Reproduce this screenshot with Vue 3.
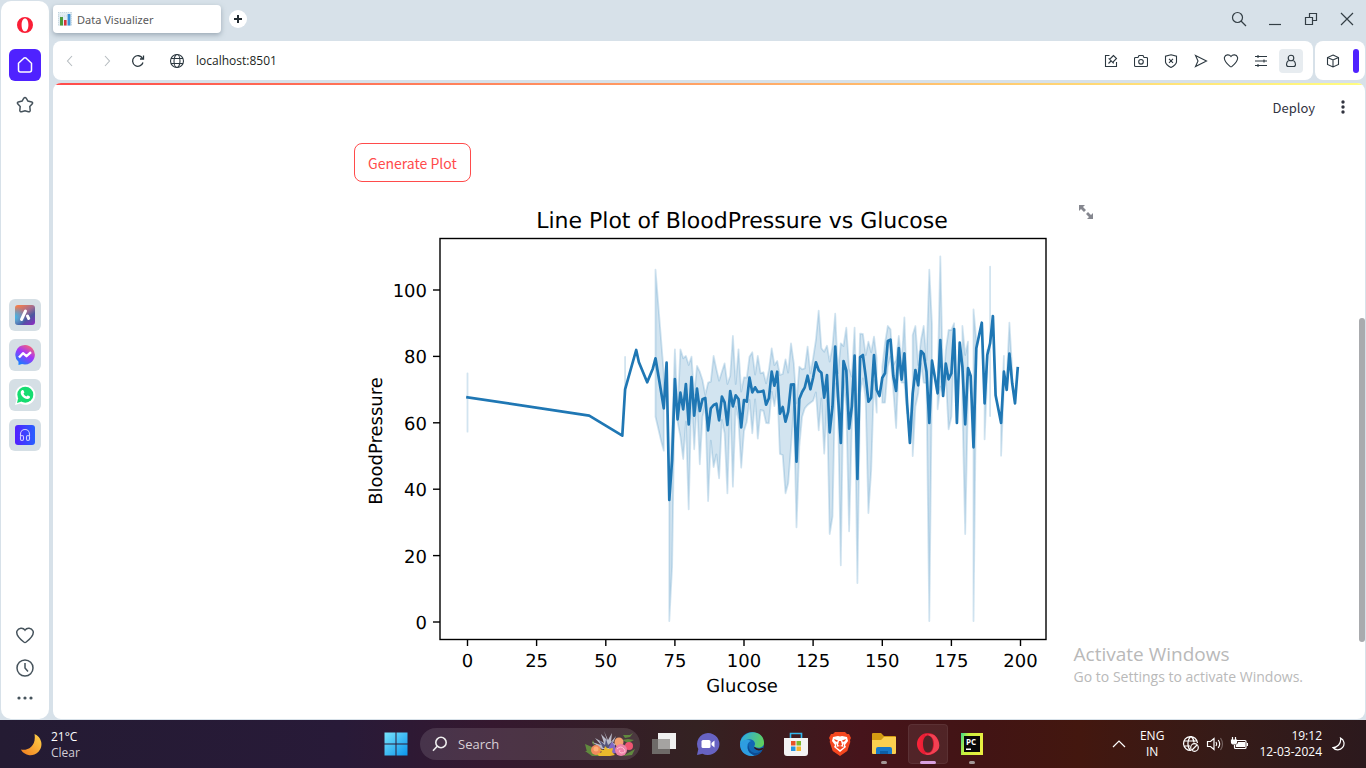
<script setup>
import { ref } from 'vue'

const address = ref('localhost:8501')
const query = ref('')

// Plot geometry: glucose on x, vertical positions in thirds of a pixel below the plot top.
const px = (g) => Math.round((467.5 + g * 2.765) * 10) / 10
const py = (v) => Math.round((240 + v / 3) * 10) / 10

const early = [[0, 472], [44, 527], [56, 587], [57, 448], [61, 330], [62, 367], [65, 427], [67, 386], [68, 355], [70, 455]]
const from71 = [
  505, 368, 780, 660, 417, 538, 458, 508, 432, 553, 411, 527, 446, 513, 478, 474, 571, 505, 495, 491,
  541, 470, 487, 555, 453, 499, 466, 477, 562, 480, 485, 413, 457, 442, 456, 455, 452, 494, 475, 395,
  437, 395, 521, 501, 545, 515, 434, 433, 665, 477, 456, 442, 407, 448, 413, 367, 391, 398, 473, 405,
  577, 500, 320, 465, 609, 363, 391, 566, 500, 347, 717, 351, 345, 410, 485, 473, 345, 449, 468, 413,
  400, 303, 299, 408, 453, 324, 419, 340, 490, 609, 460, 390, 436, 333, 342, 395, 549, 362, 410, 460,
  300, 468, 371, 418, 400, 267, 549, 308, 380, 553, 384, 408, 622, 325
]
const late = [[186, 248], [187, 490], [188, 345], [189, 310], [190, 228], [191, 466], [193, 549], [194, 395], [195, 450], [196, 341], [197, 430], [198, 490], [199, 385]]
const meanLine = [...early, ...from71.map((v, i) => [71 + i, v]), ...late]
  .map(([g, v]) => `${px(g)},${py(v)}`).join(' ')

// Confidence bands as [glucose, upper, lower]; each group is drawn without joining the next.
const bands = [
  [[0, 400, 575]],
  [[57, 351, 460]],
  [[68, 89, 530], [70, 300, 602], [71, 400, 632]],
  [[73, 770, 1143], [74, 560, 980], [75, 328, 430], [76, 515, 545], [77, 328, 590], [78, 355, 657], [79, 348, 545],
    [80, 375, 808], [81, 350, 460], [82, 465, 628], [83, 378, 480], [84, 395, 673], [85, 420, 530], [86, 465, 495],
    [87, 428, 783], [88, 425, 602], [89, 348, 681], [90, 388, 643], [91, 422, 715], [92, 395, 540], [93, 370, 580],
    [94, 432, 760], [95, 408, 475], [96, 288, 740], [97, 432, 500], [98, 328, 540], [99, 455, 683], [100, 412, 573],
    [101, 413, 545], [102, 350, 480], [103, 337, 580], [104, 404, 478], [105, 348, 596], [106, 400, 510],
    [107, 397, 512], [108, 430, 549], [109, 390, 550], [110, 325, 455], [111, 375, 498], [112, 363, 440],
    [113, 405, 642], [114, 402, 645], [115, 358, 760], [116, 398, 730], [117, 310, 620], [118, 370, 500],
    [119, 490, 862], [120, 380, 620], [121, 388, 530], [122, 385, 505], [123, 320, 495], [124, 400, 488],
    [125, 355, 482], [126, 300, 457], [127, 212, 571], [128, 325, 475], [129, 335, 641], [130, 317, 480],
    [131, 365, 882], [132, 320, 830], [133, 221, 430], [134, 400, 500], [135, 310, 976], [136, 318, 420],
    [137, 263, 500], [138, 385, 874], [139, 410, 560], [140, 263, 430], [141, 560, 1029], [142, 281, 460],
    [143, 282, 415], [144, 345, 480], [145, 305, 819], [146, 337, 690], [147, 290, 420], [148, 355, 518]],
  [[150, 380, 488], [151, 310, 488], [152, 258, 380], [153, 268, 350], [154, 375, 450], [155, 360, 564],
    [156, 288, 370], [157, 370, 428], [158, 232, 428], [159, 470, 520]],
  [[161, 285, 648], [162, 258, 500], [163, 375, 460], [164, 300, 370], [165, 258, 428], [166, 360, 430],
    [167, 89, 1143], [168, 255, 400]],
  [[170, 430, 508], [171, 49, 440], [172, 440, 460], [173, 330, 410], [174, 270, 568], [175, 270, 530], [176, 250, 300]],
  [[179, 258, 500], [180, 345, 882], [181, 305, 470]],
  [[183, 208, 1143], [184, 300, 380]],
  [[187, 480, 598], [188, 330, 400]],
  [[189, 80, 528]],
  [[193, 548, 647], [194, 348, 440]],
  [[195, 420, 450], [196, 248, 345], [197, 390, 430]]
].map((band) => [
  ...band.map(([g, hi]) => `${px(g)},${py(hi)}`),
  ...band.slice().reverse().map(([g, , lo]) => `${px(g)},${py(lo)}`)
].join(' '))

const xTicks = [0, 25, 50, 75, 100, 125, 150, 175, 200]
const yTicks = [0, 20, 40, 60, 80, 100]
const tickY = (v) => 622 - v * 3.32
</script>

<template>
  <div class="desktop">
    <div class="browser">
      <nav class="rail" aria-label="Sidebar">
        <div class="rail-group spaced">
          <button class="rail-btn" aria-label="Opera">
            <svg width="18" height="18" viewBox="0 0 18 18"><path fill="#fa1e36" fill-rule="evenodd" d="M9 1a8 8 0 1 0 0 16A8 8 0 1 0 9 1zm0 1.600c2 0 3.400 2.600 3.400 6.400S11 15.400 9 15.400 5.600 12.800 5.600 9 7 2.600 9 2.600z" /></svg>
          </button>
          <button class="rail-btn home" aria-label="Home">
            <svg width="18" height="18" viewBox="0 0 18 18"><path d="M2.500 7.200 7.800 2.200q1.200-1 2.400 0l5.300 5v6.800q0 2-2 2h-9q-2 0-2-2z" /></svg>
          </button>
          <button class="rail-btn" aria-label="Favourites">
            <svg width="18" height="18" viewBox="0 0 18 18"><path d="M7.800 2.200Q9 .8 10.200 2.200l1.700 2.900 3.800.8q1.500.5.600 1.900l-2.500 2.800.4 3.900q-.2 1.700-1.800 1.200L9 14.700l-3.400 1q-1.600.5-1.800-1.200l.4-3.900L1.700 7.800q-.9-1.400.6-1.900l3.800-.8z" /></svg>
          </button>
        </div>
        <div class="rail-group spaced apps">
          <button class="rail-btn app" aria-label="Aria">
            <svg width="20" height="20" viewBox="0 0 20 20">
              <defs><linearGradient id="aria" x1=".2" y1="0" x2=".9" y2="1"><stop offset="0" stop-color="#f57d4c" /><stop offset=".4" stop-color="#a06c92" /><stop offset=".65" stop-color="#4a58a0" /><stop offset="1" stop-color="#8a2cc0" /></linearGradient>
                <radialGradient id="aria-blue" cx="0" cy=".6" r=".55"><stop offset="0" stop-color="#40b8e8" /><stop offset="1" stop-color="#40b8e8" stop-opacity="0" /></radialGradient></defs>
              <rect width="20" height="20" rx="3" fill="url(#aria)" /><rect width="20" height="20" rx="3" fill="url(#aria-blue)" />
              <path stroke="#fff" stroke-width="3" stroke-linecap="round" d="M10.500 6 6.500 14.500M12.500 11l1.200 2.500" />
            </svg>
          </button>
          <button class="rail-btn app" aria-label="Messenger">
            <svg width="20" height="20" viewBox="0 0 20 20">
              <defs><linearGradient id="msg" x1=".8" y1="0" x2=".2" y2="1"><stop offset="0" stop-color="#ff6968" /><stop offset=".45" stop-color="#a334fa" /><stop offset="1" stop-color="#0a84ff" /></linearGradient></defs>
              <path fill="url(#msg)" d="M10 0a10 9.700 0 1 1-3 19l-3.500 1v-3.200A9.700 9.700 0 0 1 10 0z" />
              <path stroke="#fff" stroke-width="2.400" stroke-linejoin="round" d="m4 12.500 4-4.300 3.500 3 4.500-4" />
            </svg>
          </button>
          <button class="rail-btn app" aria-label="WhatsApp">
            <svg width="22" height="22" viewBox="0 0 22 22">
              <path fill="#fff" d="M1 21 2.500 15.500A10 10 0 1 1 6.500 19.600z" /><circle cx="11.300" cy="10.700" r="8" fill="#15dc70" /><path fill="#15dc70" d="m3 19 1.200-5 3.500 3.500z" />
              <path fill="#fff" d="M8 6.300c.8-.6 1.400-.3 1.700.5l.6 1.500c.1.600-.5 1-.8 1.400.7 1.300 1.700 2.200 3 2.700.5-.5.900-1.200 1.500-.9l1.600.8c.7.4.4 1.300-.1 1.900-1.200 1.300-3.500.9-5.300-.2C8 12.600 6.300 10 6.700 8c.1-.7.600-1.300 1.300-1.700z" />
            </svg>
          </button>
          <button class="rail-btn app" aria-label="Player">
            <svg width="20" height="20" viewBox="0 0 20 20">
              <defs><linearGradient id="player" x1="0" y1="0" x2="1" y2="0"><stop offset="0" stop-color="#5420ff" /><stop offset="1" stop-color="#2860ff" /></linearGradient></defs>
              <rect width="20" height="20" rx="3" fill="url(#player)" />
              <g stroke="#d5d0ff" stroke-width="1.100"><path d="M5.500 11V9a4.500 4.500 0 0 1 9 0v2" /><rect x="5.500" y="10.500" width="3" height="5" rx="1.500" /><rect x="11.500" y="10.500" width="3" height="5" rx="1.500" /></g>
            </svg>
          </button>
        </div>
        <div class="rail-group">
          <button class="rail-btn" aria-label="Likes"><svg width="20" height="18" viewBox="0 0 20 18"><path d="M10 3.200C8 .2 3.500.8 2 4c-1.500 4 3 8 6.800 11q1.200.9 2.400 0C15 12 19.500 8 18 4c-1.500-3.200-6-3.800-8-.8z" /></svg></button>
          <button class="rail-btn" aria-label="History"><svg width="18" height="18" viewBox="0 0 18 18"><circle cx="9" cy="9" r="8" /><path d="M9 4v5l3 3.500" /></svg></button>
          <button class="rail-btn more" aria-label="More"><svg width="18" height="4" viewBox="0 0 18 4" class="solid"><circle cx="3" cy="2" r="1.600" /><circle cx="9" cy="2" r="1.600" /><circle cx="15" cy="2" r="1.600" /></svg></button>
        </div>
      </nav>

      <div class="frame">
        <header class="tabs">
          <button class="tab">
            <svg width="14" height="14" viewBox="0 0 14 14"><rect width="14" height="14" fill="#e3edf2" /><path stroke="#b8cbd6" stroke-width=".6" stroke-dasharray="1 1" d="M0 .5h14M0 4h14M.5 0v14M13.500 0v14" /><path fill="#4d9a3a" d="M2 5h3v8.500H2z" /><path fill="#d8323c" d="M6 8h2.600v5.500H6z" /><path fill="#3c8fd6" d="M9.600 2h2.800v11.500H9.600z" /></svg>
            <span>Data Visualizer</span>
          </button>
          <button class="new-tab" aria-label="New tab"><svg width="10" height="10" viewBox="0 0 10 10"><path stroke-width="2" d="M5 1v8M1 5h8" /></svg></button>
          <div class="window-controls">
            <button aria-label="Search tabs"><svg width="16" height="16" viewBox="0 0 16 16"><circle cx="6.500" cy="6.500" r="5" /><path d="m10 10 5 5" /></svg></button>
            <button aria-label="Minimize"><svg width="16" height="16" viewBox="0 0 16 16"><path d="M2 13.500h12" /></svg></button>
            <button aria-label="Restore"><svg width="14" height="14" viewBox="0 0 14 14"><path d="M1.500 5.500h7v7h-7zM5.500 5.500v-4h7v7h-4" /></svg></button>
            <button aria-label="Close"><svg width="14" height="14" viewBox="0 0 14 14"><path d="m1 1 12 12M13 1 1 13" /></svg></button>
          </div>
        </header>

        <div class="toolbars">
          <div class="toolbar">
            <button class="tool faded" aria-label="Back"><svg width="8" height="12" viewBox="0 0 8 12"><path d="M6 1 1.500 6 6 11" /></svg></button>
            <button class="tool faded forward" aria-label="Forward"><svg width="8" height="12" viewBox="0 0 8 12"><path d="M2 1l4.500 5L2 11" /></svg></button>
            <button class="tool reload" aria-label="Reload"><svg width="14" height="14" viewBox="0 0 14 14"><path stroke-width="1.300" d="M12 8.500A5.300 5.300 0 1 1 11.600 4.500M12.500 1.500V5H9" /></svg></button>
            <button class="tool globe" aria-label="Site information"><svg width="16" height="16" viewBox="0 0 16 16"><circle cx="8" cy="8" r="6.500" /><ellipse cx="8" cy="8" rx="3" ry="6.500" /><path d="M2 5.500h12M2 10.500h12" /></svg></button>
            <input v-model="address" class="address" type="text" aria-label="Address">
            <div class="actions">
              <button class="tool" aria-label="Edit page"><svg width="14" height="14" viewBox="0 0 14 14"><path d="M5.500 1.500h-4v11h11V8M4.500 9.500 7 7M9.500 1.500 6.500 4.500l-1.300.3 4 4 .3-1.300 3-3z" /></svg></button>
              <button class="tool" aria-label="Snapshot"><svg width="14" height="14" viewBox="0 0 14 14"><path d="M1.500 3.500h2.500L5 1.500h4l1 2h2.500q1 0 1 1v7q0 1-1 1h-11q-1 0-1-1v-7q0-1 1-1z" /><circle cx="7" cy="7.800" r="2.300" /></svg></button>
              <button class="tool" aria-label="Tracker blocker"><svg width="14" height="14" viewBox="0 0 14 14"><path d="M7 .7 12.500 2.200v6q-.6 3-5.500 5.200Q2.100 11.200 1.500 8.200v-6zM5 4.800l4 4M9 4.800l-4 4" /></svg></button>
              <button class="tool" aria-label="Send"><svg width="14" height="14" viewBox="0 0 14 14"><path d="M1.500 1.500 12.500 7l-11 5.500L4 7z" /></svg></button>
              <button class="tool" aria-label="Add to favourites"><svg width="16" height="14" viewBox="0 0 16 14"><path d="M8 2.500C6.200 0 2.500.5 1.500 3.200 .5 6.500 4 9.700 7 12.400q1 .8 2 0c3-2.700 6.500-5.900 5.500-9.200C13.500.5 9.800 0 8 2.500z" /></svg></button>
              <button class="tool" aria-label="Easy setup"><svg width="14" height="12" viewBox="0 0 14 12"><path d="M1 1.500h12M1 6h12M1 10.500h12M4 0v3M10 4.500v3M4 9v3" /></svg></button>
              <button class="tool profile" aria-label="Profile"><svg width="14" height="14" viewBox="0 0 14 14"><circle cx="7" cy="4" r="2.800" /><path d="M4.500 6.500Q2.500 8 2.500 10.500q0 2 2 2h5q2 0 2-2Q11.500 8 9.500 6.500" /></svg></button>
            </div>
          </div>
          <div class="extras">
            <button class="tool" aria-label="Extensions"><svg width="14" height="14" viewBox="0 0 14 14"><path d="m7 1 5.500 2.500v7L7 13 1.500 10.500v-7zM1.500 3.500 7 6l5.500-2.500M7 6v7" /></svg></button>
            <button class="panel-handle" aria-label="Side panel" />
          </div>
        </div>

        <div class="page">
          <div class="decoration" />
          <header class="app-header">
            <button class="deploy">Deploy</button>
            <button class="kebab" aria-label="Main menu"><svg width="4" height="14" viewBox="0 0 4 14" class="solid"><circle cx="2" cy="2" r="1.700" /><circle cx="2" cy="7" r="1.700" /><circle cx="2" cy="12" r="1.700" /></svg></button>
          </header>
          <main>
            <button class="generate">Generate Plot</button>
            <figure>
              <svg class="chart" viewBox="354 198 704 502" role="img" aria-label="Line Plot of BloodPressure vs Glucose">
                <text x="742" y="228" class="title">Line Plot of BloodPressure vs Glucose</text>
                <polygon v-for="(band, i) in bands" :key="i" :points="band" class="band" />
                <polyline :points="meanLine" class="mean" />
                <rect x="440" y="238.500" width="606" height="401" class="axes" />
                <g v-for="t in xTicks" :key="'x' + t">
                  <line :x1="px(t)" :x2="px(t)" y1="640" y2="646" class="axes" />
                  <text :x="px(t)" y="667">{{ t }}</text>
                </g>
                <g v-for="t in yTicks" :key="'y' + t">
                  <line x1="433" x2="440" :y1="tickY(t)" :y2="tickY(t)" class="axes" />
                  <text x="427" :y="tickY(t) + 7" class="end">{{ t }}</text>
                </g>
                <text x="742" y="692">Glucose</text>
                <text transform="translate(382 441) rotate(-90)">BloodPressure</text>
              </svg>
              <button class="fullscreen" aria-label="View fullscreen"><svg width="14" height="14" viewBox="0 0 14 14"><path fill="#85878f" d="M0 0h6L4 2l3 3-2 2-3-3-2 2zM14 14H8l2-2-3-3 2-2 3 3 2-2z" /></svg></button>
            </figure>
          </main>
          <div class="scroll-thumb" />
          <aside class="watermark">
            <p class="activate">Activate Windows</p>
            <p>Go to Settings to activate Windows.</p>
          </aside>
        </div>
      </div>
    </div>

    <footer class="taskbar">
      <button class="weather">
        <svg width="24" height="24" viewBox="0 0 24 24"><defs><linearGradient id="moon" x1="1" y1="0" x2="0" y2="1"><stop offset="0" stop-color="#ffd34a" /><stop offset="1" stop-color="#f07c1e" /></linearGradient></defs><path fill="url(#moon)" d="M14.500 1A11 11 0 1 1 .8 16.500C8 18 16.500 13 14.500 1z" /></svg>
        <span>21°C<br><i>Clear</i></span>
      </button>
      <div class="dock">
        <button class="dock-btn" aria-label="Start">
          <svg width="24" height="24" viewBox="0 0 24 24"><defs><linearGradient id="win" x1="0" y1="0" x2="1" y2="1"><stop offset="0" stop-color="#78e4fb" /><stop offset="1" stop-color="#0a94ec" /></linearGradient></defs><path fill="url(#win)" d="M.500.500H11.500v11H.500zM12.500.500h11v11h-11zM.500 12.500h11v11H.500zM12.500 12.500h11v11h-11z" /></svg>
        </button>
        <label class="search">
          <svg width="16" height="16" viewBox="0 0 16 16"><circle cx="9" cy="6.500" r="5.200" /><path d="M5.200 10.200 1 14.800" /></svg>
          <input v-model="query" type="search" placeholder="Search" aria-label="Search">
          <svg width="52" height="26" viewBox="0 0 52 26" stroke="none">
            <g fill="#618a3e"><path d="m1 13 7 3 4 9-9-4zM1 20l10 0 5 5-8 0zM39 4l7 0 3-2-3 4-5 1zM38 9l6-1 6 1-6 3zM39 14l9-1-4 4zM44 22l7-4-3 6-9 1zM8 12l1-3 2 6z" /></g>
            <path fill="#b9bac8" d="m20 0 3 9L17 3l3 9-9-5 6 7-9-3 10 7h10l4-5-3-1 3-7-5 6 1-9-4 7z" />
            <path fill="#55567c" d="m15 9 6 5 1-6 2 6 5-4-4 7h-6z" />
            <circle cx="12" cy="19" r="5" fill="#f18b5d" /><circle cx="12" cy="18" r="2.500" fill="#ffb078" />
            <circle cx="35" cy="11" r="4.500" fill="#f4a171" /><circle cx="45" cy="15" r="4" fill="#ef5572" />
            <path fill="#8068c8" d="m25 16 3-5 3 4 1 7-6 1z" />
            <path fill="#eab92d" d="m21 15 3 3 5-1-1 4 3 3-5 1H15l-2-2 5-2-4-3 6 1z" />
            <circle cx="37" cy="19" r="6" fill="#ed82a8" /><path stroke="#ffc1d2" fill="none" d="M33 18q4-4 7 0t-3 4q-3-1-1-3" />
          </svg>
        </label>
        <button class="dock-btn" aria-label="Task view"><svg width="24" height="24" viewBox="0 0 24 24"><path fill="#f0f0f0" d="M6 1h18v16H6z" /><path fill="#6e6a68" d="M0 7h18v15H0z" /><path fill="#a5a3a1" d="M6 7h12v10H6z" /></svg></button>
        <button class="dock-btn" aria-label="Chat"><svg width="24" height="24" viewBox="0 0 24 24"><path fill="#6763c2" d="M12 1a11.500 11 0 1 1-5.500 20.700L1 23l1.300-6A11.500 11 0 0 1 12 1z" /><rect x="5.500" y="8" width="9" height="8" rx="1.500" fill="#fff" /><path fill="#fff" d="m15.500 11 3-2.500v7l-3-2.500z" /></svg></button>
        <button class="dock-btn" aria-label="Edge">
          <svg width="24" height="24" viewBox="0 0 24 24"><defs><linearGradient id="edge" x1="0" y1=".3" x2="1" y2=".5"><stop offset="0" stop-color="#2ba8e8" /><stop offset="1" stop-color="#60d05c" /></linearGradient></defs>
            <circle cx="12" cy="12" r="12" fill="#1267b5" /><path fill="url(#edge)" d="M0 12C1-3 24-4 24 11c0 4-5 6-9 4-1.500-.8 0-1.500 0-3 0-4-5-6-9-4-3 1-5 3-6 4z" />
            <path fill="#2e9de0" d="M0 12c2-5 8-5 11-3-5 1-5 10 1 13l2 1.800C6 25 0 20 0 12z" /><path fill="#0d4c94" d="M10 10c-3 3-1 9 3 10.500 4 1.500 8-.5 9.500-3C18 28 6 22 8 14c.3-1.700 1-3 2-4z" /><path fill="#341418" d="M14.500 15q4 3 9 .5l-.8 2Q17 20 14 16z" /></svg>
        </button>
        <button class="dock-btn" aria-label="Microsoft Store"><svg width="24" height="24" viewBox="0 0 24 24"><path fill="#f3f3f3" d="M0 6h24v15q0 3-3 3H3q-3 0-3-3z" /><path stroke="#32b5ec" stroke-width="1.600" d="M6.500 6V1.500h11V6" /><path fill="#e85127" d="M7 9h4.500v4.500H7z" /><path fill="#7db82d" d="M12.500 9H17v4.500h-4.500z" /><path fill="#2594df" d="M7 14.500h4.500V19H7z" /><path fill="#f4b52b" d="M12.500 14.500H17V19h-4.500z" /></svg></button>
        <button class="dock-btn" aria-label="Brave"><svg width="22" height="24" viewBox="0 0 22 24"><path fill="#f4471f" d="m6 0h10l2 2h2l2 4-1 2 .3 2-3 9-7.300 5-7.300-5-3-9L1 8 0 6l2-4h2z" /><path fill="#fff" d="m4 5 5-1 2 .5L13 4l5 1 1 4-3 4 1 2-6 5-6-5 1-2-3-4z" /><path fill="#f4471f" d="m5 7 4 1.500L8 10 6 9zM17 7l-4 1.500 1 1.500 2-1zM10 9h2l1 4-2 1-2-1zM7 15l4-1 4 1-4 3zM7 11l1 3-1 1zM15 11l-1 3 1 1z" /></svg></button>
        <button class="dock-btn running" aria-label="File Explorer"><svg width="24" height="24" viewBox="0 0 24 24"><path fill="#d39b12" d="M0 2q0-1 1-1h8l3 3h11q1 0 1 1v5H0z" /><path fill="#fbcf4f" d="M0 8h9l3-3h12v16q0 1-1 1H1q-1 0-1-1z" /><path fill="#1778c8" d="M4 22v-5q0-2 2-2h12q2 0 2 2v5z" /><path fill="#0d5ea5" d="M8 19h8v3H8z" /></svg></button>
        <button class="dock-btn running current" aria-label="Opera"><svg width="24" height="24" viewBox="0 0 24 24"><defs><linearGradient id="op"><stop offset="0" stop-color="#ff253a" /><stop offset="1" stop-color="#b90c25" /></linearGradient></defs><path fill="url(#op)" fill-rule="evenodd" d="M12 1a11 11 0 1 0 0 22A11 11 0 1 0 12 1zm0 2.500c3 0 5 3.500 5 8.500s-2 8.500-5 8.500S7 17 7 12s2-8.500 5-8.500z" /><path fill="#f34153" d="M9 3.500Q18-1 22 8t-4 13-9 0q7 2 8.500-6T14 4 9 3.500z" /></svg></button>
        <button class="dock-btn running" aria-label="PyCharm"><svg width="22" height="22" viewBox="0 0 22 22"><defs><linearGradient id="pc" x1="0" y1="0" x2="1" y2=".3"><stop offset="0" stop-color="#39d98b" /><stop offset=".35" stop-color="#c8ef3c" /><stop offset="1" stop-color="#e9ef41" /></linearGradient></defs><path fill="url(#pc)" d="M0 0h22v22H0z" /><path fill="#080808" d="M3 3h16v16H3z" /><path fill="#fff" d="M5 15.500h5V17H5z" /><text x="5" y="12" class="pc">PC</text></svg></button>
      </div>
      <div class="tray">
        <button aria-label="Show hidden icons"><svg width="14" height="8" viewBox="0 0 14 8"><path d="m1 7 6-6 6 6" /></svg></button>
        <button class="lang">ENG<br>IN</button>
        <button class="status" aria-label="Network, sound and battery">
          <svg width="18" height="18" viewBox="0 0 18 18"><path d="M9 15.500A7 7 0 1 1 15.500 8M9 1.500c-4 3-4 11-.5 14M9 1.500c2 1.500 3 4 3 6M2 6h13M2 11h6" /><circle cx="12.500" cy="12.500" r="3.800" /><path d="m10 15 5-5" /></svg>
          <svg width="18" height="16" viewBox="0 0 18 16"><path d="M1.500 5.500h3L8 2.500v11L4.500 10.500h-3zM10 6q1.500 2 0 4M12.200 4q3 4 0 8" /><path opacity=".3" d="M14.500 2q4 6 0 12" /></svg>
          <svg width="18" height="14" viewBox="0 0 18 14"><path d="M7 3.500h8q1 0 1 1v6q0 1-1 1H5.500q-1 0-1-1V8M17.500 6v3" /><path fill="#fff" d="M8.500 5.500h6v4h-8V8l2-1.500zM1.500 3h5v2q0 2-2.500 2T1.500 5zM2.500 0v3M5.500 0v3" /></svg>
        </button>
        <button class="clock">19:12<br>12-03-2024</button>
        <button aria-label="Focus"><svg width="14" height="14" viewBox="0 0 14 14"><path d="M8.500 1A6.200 6.200 0 1 1 1 10.500C5 10.500 9.500 7 8.500 1z" /></svg></button>
      </div>
    </footer>
  </div>
</template>

<style>
body { margin: 0; }
</style>

<style scoped>
.desktop { height: 100vh; display: flex; flex-direction: column; overflow: hidden; background: #d7e1e9; color: #2c3840; font-family: "Open Sans", "Noto Sans", sans-serif; font-size: 12px; }
.desktop * { box-sizing: border-box; }
button { display: flex; align-items: center; justify-content: center; padding: 0; border: 0; background: none; color: inherit; font: inherit; flex: none; }
input { min-width: 0; padding: 0; border: 0; outline: 0; background: none; color: inherit; font: inherit; }
svg { display: block; flex: none; fill: none; stroke: none; }
.browser { flex: 1; min-height: 0; display: flex; gap: 4px; padding: 1px; }
.rail { width: 48px; flex: none; display: flex; flex-direction: column; align-items: center; justify-content: space-between; padding: 8px 0 7px; border-radius: 10px; background: #fff; }
.rail-group { display: flex; flex-direction: column; }
.spaced { gap: 8px; }
.apps { padding-top: 8px; }
.rail-btn { width: 32px; height: 32px; border-radius: 6px; }
.rail-btn > svg { stroke: #46535c; stroke-width: 1.500; }
.rail-group:first-child .rail-btn:first-child > svg { stroke: none; }
.home { background: #4f22ff; }
.rail-btn.home > svg { stroke: #fff; }
.app { background: #d5dfe5; }
.rail-btn.app > svg { stroke: none; }
.more { height: 28px; }
.rail-btn .solid { fill: #46535c; stroke: none; }
.frame { flex: 1; min-width: 0; display: flex; flex-direction: column; }
.tabs { height: 40px; flex: none; display: flex; align-items: flex-start; padding-top: 4px; }
.tab { width: 168px; height: 28px; justify-content: flex-start; gap: 5px; padding-left: 5px; border-radius: 4px; background: #fff; color: #5a5a5a; box-shadow: 0 2px 5px #67788788; font-size: 11px; font-family: "Noto Sans", sans-serif; }
.new-tab { width: 18px; height: 18px; margin: 5px 0 0 8px; border-radius: 50%; background: #fff; }
.new-tab svg { stroke: #222b31; }
.window-controls { display: flex; margin-left: auto; }
.window-controls button { width: 36px; height: 28px; }
.window-controls svg { stroke: #333e45; stroke-width: 1.200; }
.toolbars { display: flex; gap: 2px; height: 39px; flex: none; }
.toolbar, .extras { display: flex; align-items: center; border-radius: 8px; background: #fff; }
.toolbar { flex: 1; min-width: 0; padding: 0 10px 0 5px; }
.extras { width: 50px; justify-content: space-between; padding: 0 6px; }
.tool { width: 24px; height: 24px; border-radius: 4px; }
.tool svg { stroke: #2c3840; stroke-width: 1.100; }
.tool.faded svg { stroke: #b6bcc0; }
.forward { margin-left: 13px; }
.reload { margin-left: 7px; }
.globe { margin-left: 15px; }
.address { flex: 1; margin-left: 7px; color: #1c1f22; font-size: 12px; }
.actions { display: flex; gap: 6px; }
.profile { background: #e7ecf0; }
.panel-handle { width: 6px; height: 24px; border-radius: 3px; background: #4f22ff; }
.page { position: relative; flex: 1; min-height: 0; margin-top: 3px; overflow: hidden; border-radius: 8px; background: #fff; }
.decoration { height: 2px; background: linear-gradient(90deg, #ff4b4b, #fffd80); }
.app-header { display: flex; align-items: center; justify-content: flex-end; height: 44px; padding-right: 20px; color: #31333f; font-family: "Noto Sans CJK SC", sans-serif; font-size: 13px; }
.kebab { width: 4px; margin-left: 26px; }
.kebab svg { fill: #31333f; }
main { max-width: 710px; margin: 14px auto 0; padding-right: 6px; }
.generate { height: 39px; padding: 0 13px; border: 1px solid #ff4b4b; border-radius: 8px; color: #ff4b4b; font-family: "Noto Sans CJK SC", sans-serif; font-size: 14px; }
figure { position: relative; margin: 16px 0 0; }
.chart { width: 100%; font-family: "DejaVu Sans", sans-serif; font-size: 18px; text-rendering: geometricPrecision; }
.chart text { fill: #000; text-anchor: middle; }
.chart .title { font-size: 22px; }
.chart .end { text-anchor: end; }
.axes { stroke: #000; stroke-width: 1.400; }
.band { fill: #1f77b4; fill-opacity: .2; stroke: #1f77b4; stroke-opacity: .2; stroke-width: 1.800; stroke-linejoin: round; }
.mean { stroke: #1f77b4; stroke-width: 2.700; stroke-linejoin: round; stroke-linecap: square; }
.fullscreen { position: absolute; top: 7px; right: -35px; }
.scroll-thumb { position: absolute; right: 0; top: 235px; width: 6px; height: 324px; border-radius: 3px; background: #a9abae; }
.watermark { position: absolute; right: 62px; bottom: 32px; color: #b9b9b9; font-size: 14px; line-height: 20px; }
.watermark p { margin: 0; }
.watermark .activate { font-size: 19px; line-height: 26px; }
.taskbar { height: 48px; flex: none; display: grid; grid-template-columns: minmax(0, 1fr) auto minmax(0, 1fr); align-items: center; padding-left: 2px; color: #fff; background: linear-gradient(90deg, #241b33 0%, #281a38 25%, #35182f 36%, #342222 51%, #46141b 63%, #421414 72%, #43170f 79%, #351b18 90%, #2c191d 100%); }
.weather { justify-self: start; gap: 7px; margin: 2px 0 0 18px; text-align: left; line-height: 16px; }
.weather i { font-style: normal; color: #d2cdd6; }
.dock { display: flex; gap: 4px; align-items: center; }
.dock-btn { position: relative; width: 40px; height: 40px; border-radius: 4px; }
.search { width: 220px; height: 32px; display: flex; align-items: center; gap: 10px; padding: 0 4px 0 12px; border-radius: 16px; background: #ffffff1e; }
.search > svg:first-child { stroke: #eee; stroke-width: 1.600; }
.search input { flex: 1; font-size: 13px; }
.search input::placeholder { color: #d8d0d6; opacity: 1; }
.running::after { content: ""; position: absolute; bottom: 0; width: 6px; height: 3px; border-radius: 2px; background: #a39797; }
.current { background: #ffffff12; box-shadow: inset 0 0 0 1px #ffffff10; }
.current::after { width: 16px; background: #d9a0e0; }
.pc { fill: #fff; font: 700 8px "Open Sans", sans-serif; }
.tray { display: flex; align-items: center; justify-content: flex-end; padding-right: 20px; line-height: 16px; font-size: 12px; }
.tray svg { stroke: #fff; stroke-width: 1.200; }
.lang { margin-left: 14px; }
.status { gap: 6px; margin-left: 18px; }
.clock { margin: 0 10px 0 11px; text-align: right; }
</style>
